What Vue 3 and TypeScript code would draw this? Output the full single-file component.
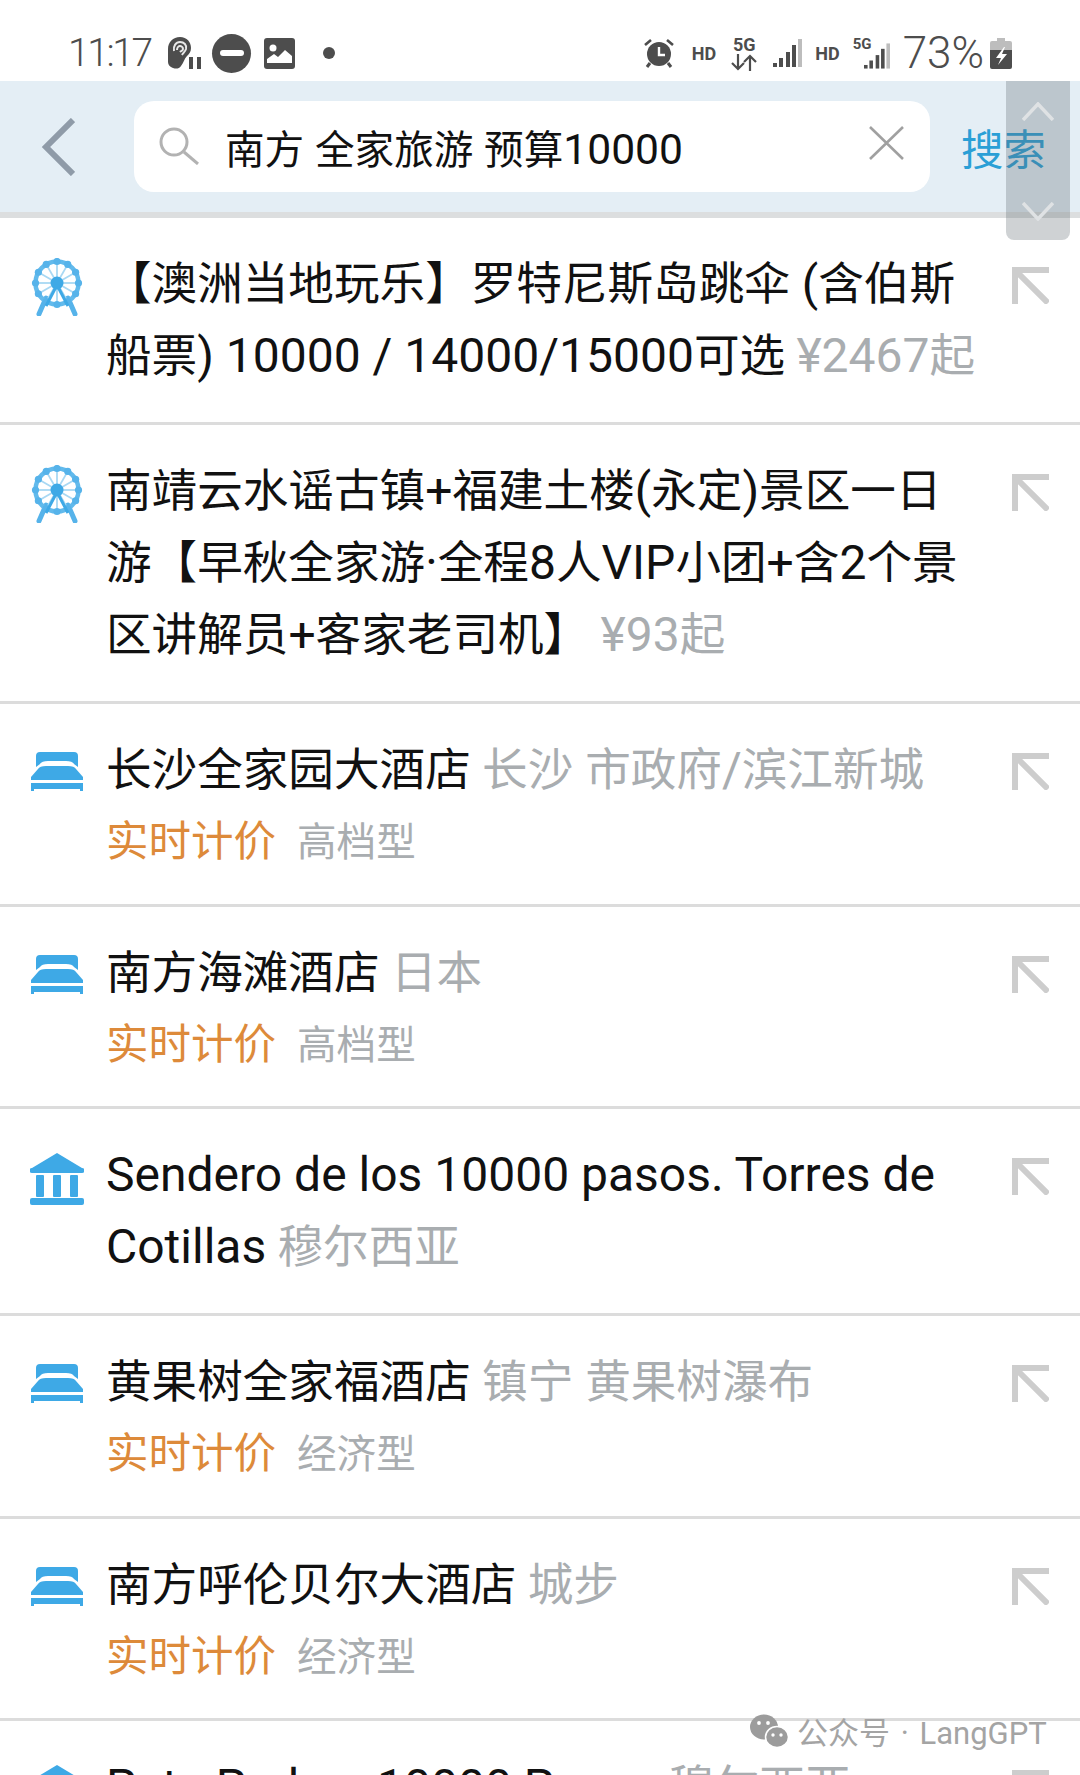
<template>
  <div class="phone">
    <div class="status">
      <span class="time">11:17</span>
      <svg class="ear" viewBox="0 0 35 32">
        <path d="M13 0c7 0 11 5 11 11 0 4-2 6-4 8-3 3-3 6-6 10-2 3-5 3-8 2-3-1-5-3-5-6V12C1 5 6 0 13 0z" fill="#4d4d4d" />
        <path d="M7 14c-1-5 2-9 6-9s7 3 6 7c-1 3-3 4-4 6M10 13c0-3 2-4 3-4s3 1 3 3-2 2-3 3" fill="none" stroke="#e8e8e8" stroke-width="2" />
        <rect x="22" y="20" width="4" height="12" fill="#4d4d4d" />
        <rect x="30" y="20" width="4" height="12" fill="#4d4d4d" />
      </svg>
      <span class="dnd"><i></i></span>
      <svg class="pic" viewBox="0 0 31 31">
        <rect width="31" height="31" rx="3" fill="#4d4d4d" />
        <circle cx="9" cy="10" r="3.5" fill="#fff" />
        <path d="M3 25v-4l7-5 4 3 7-7 7 6v7z" fill="#fff" />
      </svg>
      <span class="dot"></span>
      <span class="spacer"></span>
      <svg class="alarm" viewBox="0 0 30 30">
        <circle cx="15" cy="16" r="12" fill="#4d4d4d" />
        <path d="M15 9v8h6" fill="none" stroke="#fff" stroke-width="2.4" />
        <path d="M1 7l6-5M29 7l-6-5" stroke="#4d4d4d" stroke-width="2.6" />
        <path d="M6 25l-3 4M24 25l3 4" stroke="#4d4d4d" stroke-width="3" />
      </svg>
      <span class="hd">HD</span>
      <span class="net">5G<svg viewBox="0 0 26 17"><path d="M7 0v15M1 9l6 6 6-6M19 17V2M13 8l6-6 6 6" fill="none" stroke="#4d4d4d" stroke-width="2.2" /></svg></span>
      <svg class="signal" viewBox="0 0 29 28">
        <rect x="0" y="24" width="4" height="4" fill="#4d4d4d" />
        <rect x="6" y="19" width="4" height="9" fill="#4d4d4d" />
        <rect x="13" y="13" width="4" height="15" fill="#4d4d4d" />
        <rect x="19" y="6" width="4" height="22" fill="#4d4d4d" />
        <rect x="25" y="0" width="4" height="28" fill="#bdbdbd" />
      </svg>
      <span class="hd hd2">HD</span>
      <span class="sim2">
        <span class="net-small">5G</span>
        <svg class="signal small" viewBox="0 0 29 28">
          <rect x="0" y="24" width="4" height="4" fill="#4d4d4d" />
          <rect x="6" y="19" width="4" height="9" fill="#4d4d4d" />
          <rect x="13" y="13" width="4" height="15" fill="#4d4d4d" />
          <rect x="19" y="6" width="4" height="22" fill="#4d4d4d" />
          <rect x="25" y="0" width="4" height="28" fill="#bdbdbd" />
        </svg>
      </span>
      <span class="pct">73%</span>
      <svg class="batt" viewBox="0 0 22 31">
        <path d="M7 0h8v3h5a2 2 0 0 1 2 2v7H0V5a2 2 0 0 1 2-2h5z" fill="#bdbdbd" />
        <path d="M0 12h22v17a2 2 0 0 1-2 2H2a2 2 0 0 1-2-2z" fill="#4d4d4d" />
        <path d="M14 9l-8 11h5l-3 7 9-11h-5l3-7z" fill="#fff" />
      </svg>
    </div>

    <div class="search-bar">
      <svg class="back" viewBox="0 0 34 58"><path d="M32 2L5 29l27 27" fill="none" stroke="#8f9ba8" stroke-width="6" /></svg>
      <div class="search-box">
        <svg class="lens" viewBox="0 0 41 38">
          <circle cx="15" cy="15" r="13" fill="none" stroke="#b2b2b2" stroke-width="3" />
          <path d="M25 25l14 12" stroke="#b2b2b2" stroke-width="3" />
        </svg>
        <span class="query">南方 全家旅游 预算<span class="q-num">10000</span></span>
        <svg class="clear" viewBox="0 0 35 34"><path d="M1 1l33 32M34 1L1 33" stroke="#a0a0a0" stroke-width="2.6" /></svg>
      </div>
      <span class="go">搜索</span>
    </div>

    <div class="list">
      <div v-for="(row, i) in rows" :key="i" class="row">
        <svg class="kind" viewBox="0 0 54 58">
          <g v-if="row.icon === 'wheel'" fill="#3ea9e6">
            <path d="M16 40L9 56M38 40l7 16" stroke="#56b3ea" stroke-width="5" stroke-linecap="round" />
            <path v-for="n in nodes" :key="n.x" :d="`M27 25L${n.x} ${n.y}`" stroke="#a8d8f3" stroke-width="1.8" />
            <circle cx="27" cy="25" r="21.5" fill="none" stroke="#62baec" stroke-width="4.5" />
            <circle v-for="n in nodes" :key="n.x" :cx="n.x" :cy="n.y" r="3.6" fill="#56b3ea" />
            <circle cx="27" cy="25" r="6.5" />
            <path d="M27 27L16 48M27 27l11 21" fill="none" stroke="#3ea9e6" stroke-width="3" />
          </g>
          <g v-else-if="row.icon === 'bed'" fill="#3ea9e6">
            <path d="M6 23V12a4 4 0 0 1 4-4h34a4 4 0 0 1 4 4v11l-4-3c-1-2-4-3-8-3H18c-4 0-7 1-8 3z" />
            <path d="M1 36v-3l7-8c1-2 4-3 8-3h22c4 0 7 1 8 3l7 8v3z" />
            <path d="M1 39h52v8h-3v-2H4v2H1z" />
          </g>
          <g v-else fill="#3ea9e6" transform="translate(0 4)">
            <path d="M27 0L52 15a2 2 0 0 1 0 5H2a2 2 0 0 1 0-5z" />
            <rect x="6" y="22" width="8" height="22" rx="1" />
            <rect x="23" y="22" width="8" height="22" rx="1" />
            <rect x="40" y="22" width="8" height="22" rx="1" />
            <rect x="0" y="45" width="54" height="7" rx="2" />
          </g>
        </svg>
        <div class="body">
          <div class="title">
            <span v-for="(p, j) in parts(row.title)" :key="j" :class="{ latin: p.latin }">{{ p.text }}</span>{{ " " }}<span class="meta"><span v-for="(p, j) in parts(row.meta)" :key="j" :class="{ latin: p.latin }">{{ p.text }}</span></span>
          </div>
          <div v-if="row.grade" class="sub"><span class="live">实时计价</span><span class="grade">{{ row.grade }}</span></div>
        </div>
        <svg class="fill-in" viewBox="0 0 37 37"><path d="M37 3H3v34M3 3l33 33" fill="none" stroke="#cdcdcd" stroke-width="6" /></svg>
      </div>
    </div>

    <div class="scroller">
      <svg viewBox="0 0 32 19"><path d="M1 18L16 2l15 16" fill="none" stroke="#dfe2e4" stroke-width="3.5" /></svg>
      <svg viewBox="0 0 32 19"><path d="M1 1l15 16L31 1" fill="none" stroke="#dfe2e4" stroke-width="3.5" /></svg>
    </div>

    <div class="mark">
      <svg viewBox="0 0 40 34">
        <ellipse cx="15" cy="13" rx="14" ry="12.5" fill="#9c9c9c" />
        <ellipse cx="28" cy="23" rx="11.5" ry="10.5" fill="#9c9c9c" stroke="#fff" stroke-width="1.5" />
        <circle cx="24" cy="21" r="1.7" fill="#fff" />
        <circle cx="32" cy="21" r="1.7" fill="#fff" />
        <circle cx="10" cy="9" r="1.9" fill="#fff" />
        <circle cx="19" cy="9" r="1.9" fill="#fff" />
      </svg>
      <span>公众号 · LangGPT</span>
    </div>
  </div>
</template>

<script setup lang="ts">
interface Row {
  icon: "wheel" | "bed" | "museum";
  title: string;
  meta: string;
  grade?: string;
}

const rows: Row[] = [
  { icon: "wheel", title: "【澳洲当地玩乐】罗特尼斯岛跳伞 (含伯斯船票) 10000 / 14000/15000可选", meta: "¥2467起" },
  { icon: "wheel", title: "南靖云水谣古镇+福建土楼(永定)景区一日游【早秋全家游·全程8人VIP小团+含2个景区讲解员+客家老司机】", meta: "¥93起" },
  { icon: "bed", title: "长沙全家园大酒店", meta: "长沙 市政府/滨江新城", grade: "高档型" },
  { icon: "bed", title: "南方海滩酒店", meta: "日本", grade: "高档型" },
  { icon: "museum", title: "Sendero de los 10000 pasos. Torres de Cotillas", meta: "穆尔西亚" },
  { icon: "bed", title: "黄果树全家福酒店", meta: "镇宁 黄果树瀑布", grade: "经济型" },
  { icon: "bed", title: "南方呼伦贝尔大酒店", meta: "城步", grade: "经济型" },
  { icon: "museum", title: "Pata Padres 10000 Pasos", meta: "穆尔西亚" },
];

// the latin runs sit a bit larger than the chinese ones
function parts(text: string) {
  return (text.match(/[\x20-\x7e¥·]+|[^\x20-\x7e¥·]+/g) ?? []).map((t) => ({
    text: t,
    latin: /^[\x20-\x7e¥·]/.test(t),
  }));
}

// little cabins round the wheel
const nodes = Array.from({ length: 12 }, (_, n) => ({
  x: 27 + 21.5 * Math.cos((n * Math.PI) / 6),
  y: 25 + 21.5 * Math.sin((n * Math.PI) / 6),
}));
</script>

<style scoped>
.phone {
  position: relative;
  width: 1080px;
  height: 1775px;
  overflow: hidden;
  background: #fff;
  font-family: Roboto, "Noto Sans CJK SC", sans-serif;
  color: #111;
}

.status {
  display: flex;
  align-items: center;
  height: 81px;
  padding: 25px 68px 0 68px;
  box-sizing: border-box;
  color: #4d4d4d;
}
.time {
  font-size: 39px;
  font-weight: 300;
  letter-spacing: -2.4px;
  width: 99px;
}
.ear { width: 35px; height: 32px; }
.dnd {
  display: flex;
  align-items: center;
  justify-content: center;
  width: 39px;
  height: 39px;
  margin-left: 10px;
  border-radius: 50%;
  background: #4d4d4d;
}
.dnd i {
  width: 24px;
  height: 6px;
  border-radius: 3px;
  background: #fff;
}
.pic { width: 31px; height: 31px; margin-left: 13px; }
.dot {
  width: 12px;
  height: 12px;
  margin-left: 28px;
  border-radius: 50%;
  background: #4d4d4d;
}
.spacer { flex: 1; }
.alarm { width: 30px; height: 30px; }
.hd {
  margin-left: 18px;
  font-size: 18px;
  font-weight: 700;
}
.hd2 { margin-left: 13px; }
.net {
  display: flex;
  flex-direction: column;
  align-items: center;
  width: 26px;
  margin-left: 15px;
  font-size: 18px;
  font-weight: 700;
  line-height: 18px;
}
.net svg { width: 26px; height: 17px; }
.signal { width: 29px; height: 28px; margin-left: 16px; }
.sim2 {
  position: relative;
  display: flex;
  align-items: flex-end;
  width: 37px;
  height: 33px;
  margin-left: 13px;
}
.net-small {
  position: absolute;
  top: 0;
  left: 0;
  font-size: 15px;
  font-weight: 700;
  line-height: 15px;
}
.signal.small { width: 26px; height: 28px; margin-left: 11px; }
.pct {
  margin-left: 13px;
  font-size: 44px;
  font-weight: 300;
}
.batt { width: 22px; height: 31px; margin-left: 6px; }

.search-bar {
  display: flex;
  align-items: center;
  height: 131px;
  border-bottom: 6px solid #dcdedf;
  background: #e4eef5;
}
.back { width: 34px; height: 58px; margin-left: 41px; }
.search-box {
  display: flex;
  align-items: center;
  width: 796px;
  height: 91px;
  margin-left: 59px;
  padding: 0 26px 0 25px;
  box-sizing: border-box;
  border-radius: 20px;
  background: #fff;
}
.lens { width: 41px; height: 38px; margin-top: -2px; }
.query {
  flex: 1;
  margin-left: 25px;
  font-size: 39.6px;
  word-spacing: 1px;
  white-space: nowrap;
}
.q-num { font-size: 42.6px; line-height: 1; }
.clear { width: 35px; height: 34px; margin-top: -8px; }
.go {
  margin-left: 31px;
  color: #2a9fd6;
  font-size: 42.5px;
  white-space: nowrap;
}

.row {
  display: flex;
  align-items: flex-start;
  padding: 31px 30px 29px;
  border-bottom: 3px solid #dcdcdc;
}
.kind {
  flex: none;
  width: 54px;
  height: 58px;
  margin-top: 9px;
}
.body {
  flex: none;
  width: 870px;
  margin-left: 22px;
  font-size: 45.6px;
  line-height: 72px;
}
.latin { font-size: 48px; line-height: 1; }
.meta { color: #a9adb0; }
.sub { line-height: 67.6px; white-space: nowrap; }
.live {
  color: #dd8a3a;
  font-size: 42.5px;
  line-height: 1;
}
.grade {
  margin-left: 21px;
  color: #a9adb0;
  font-size: 39.6px;
  line-height: 1;
}
.fill-in {
  flex: none;
  width: 37px;
  height: 37px;
  margin: 18px 0 0 36px;
}

.scroller {
  position: absolute;
  top: 81px;
  left: 1006px;
  display: flex;
  flex-direction: column;
  align-items: center;
  justify-content: space-between;
  width: 64px;
  height: 159px;
  padding: 21px 0 19px;
  box-sizing: border-box;
  border-radius: 0 0 8px 8px;
  background: rgba(95, 105, 112, 0.3);
}
.scroller svg { width: 32px; height: 19px; }

.mark {
  position: absolute;
  top: 1708px;
  left: 749px;
  display: flex;
  align-items: center;
  gap: 8px;
  color: #a4a4a4;
  font-size: 31px;
  word-spacing: 3px;
  white-space: nowrap;
}
.mark svg { width: 40px; height: 34px; }
</style>

<style>
html,
body {
  margin: 0;
  background: #fff;
}
</style>
